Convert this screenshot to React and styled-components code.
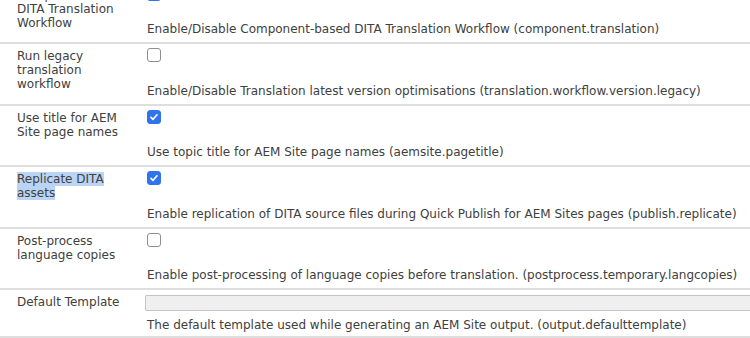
import React from "react";
import styled, { createGlobalStyle } from "styled-components";

const GlobalStyle = createGlobalStyle`
  html, body {
    margin: 0;
    padding: 0;
    background: #fff;
    overflow: hidden;
  }
  body {
    font-family: "DejaVu Sans", Verdana, sans-serif;
  }
`;

const Table = styled.div`
  width: 790px;
  margin-top: -17.5px;
`;

const Row = styled.div`
  display: grid;
  grid-template-columns: 147px 1fr;
  border-bottom: 2px solid #dedede;
  box-sizing: border-box;
`;

const Label = styled.div`
  padding: 5px 0 0 17px;
  width: 112px;
  font-size: 12px;
  line-height: 14px;
  color: #404040;
`;

const Selected = styled.span`
  background: #b9d4f4;
`;

const Value = styled.div`
  display: flex;
  flex-direction: column;
  align-items: flex-start;
  padding: ${(p) => (p.$field ? "5px 0 4px" : "4px 0 6px")};
`;

const Box = styled.span`
  width: 14px;
  height: 14px;
  box-sizing: border-box;
  border-radius: 3px;
  display: flex;
  align-items: center;
  justify-content: center;
  background: ${(p) => (p.$checked ? "#2f74ec" : "#fff")};
  border: 1px solid ${(p) => (p.$checked ? "#2f74ec" : "#8f8f8f")};
`;

const Description = styled.div`
  margin-top: ${(p) => (p.$field ? "7px" : "21.5px")};
  font-size: 12px;
  line-height: 14px;
  color: #404040;
  white-space: nowrap;
`;

const TextField = styled.div`
  width: 100%;
  height: 16px;
  box-sizing: border-box;
  margin-left: -2px;
  background: #efefef;
  border: 1px solid #c4c4c4;
  border-radius: 1px;
`;

function Checkbox({ checked }) {
  return (
    <Box $checked={checked}>
      {checked && (
        <svg width="10" height="10" viewBox="0 0 10 10">
          <path
            d="M2 5.3 L4.1 7.3 L8 2.8"
            fill="none"
            stroke="#fff"
            strokeWidth="1.7"
            strokeLinecap="round"
            strokeLinejoin="round"
          />
        </svg>
      )}
    </Box>
  );
}

const settings = [
  {
    label: "Component-based DITA Translation Workflow",
    checked: true,
    text: "Enable/Disable Component-based DITA Translation Workflow (component.translation)",
  },
  {
    label: "Run legacy translation workflow",
    checked: false,
    text: "Enable/Disable Translation latest version optimisations (translation.workflow.version.legacy)",
  },
  {
    label: "Use title for AEM Site page names",
    checked: true,
    text: "Use topic title for AEM Site page names (aemsite.pagetitle)",
  },
  {
    label: "Replicate DITA assets",
    checked: true,
    selected: true,
    text: "Enable replication of DITA source files during Quick Publish for AEM Sites pages (publish.replicate)",
  },
  {
    label: "Post-process language copies",
    checked: false,
    text: "Enable post-processing of language copies before translation. (postprocess.temporary.langcopies)",
  },
];

export default function App() {
  return (
    <>
      <GlobalStyle />
      <Table>
        {settings.map((s) => (
          <Row key={s.label}>
            <Label>{s.selected ? <Selected>{s.label}</Selected> : s.label}</Label>
            <Value>
              <Checkbox checked={s.checked} />
              <Description>{s.text}</Description>
            </Value>
          </Row>
        ))}
        <Row>
          <Label>Default Template</Label>
          <Value $field>
            <TextField />
            <Description $field>
              The default template used while generating an AEM Site output. (output.defaulttemplate)
            </Description>
          </Value>
        </Row>
      </Table>
    </>
  );
}
